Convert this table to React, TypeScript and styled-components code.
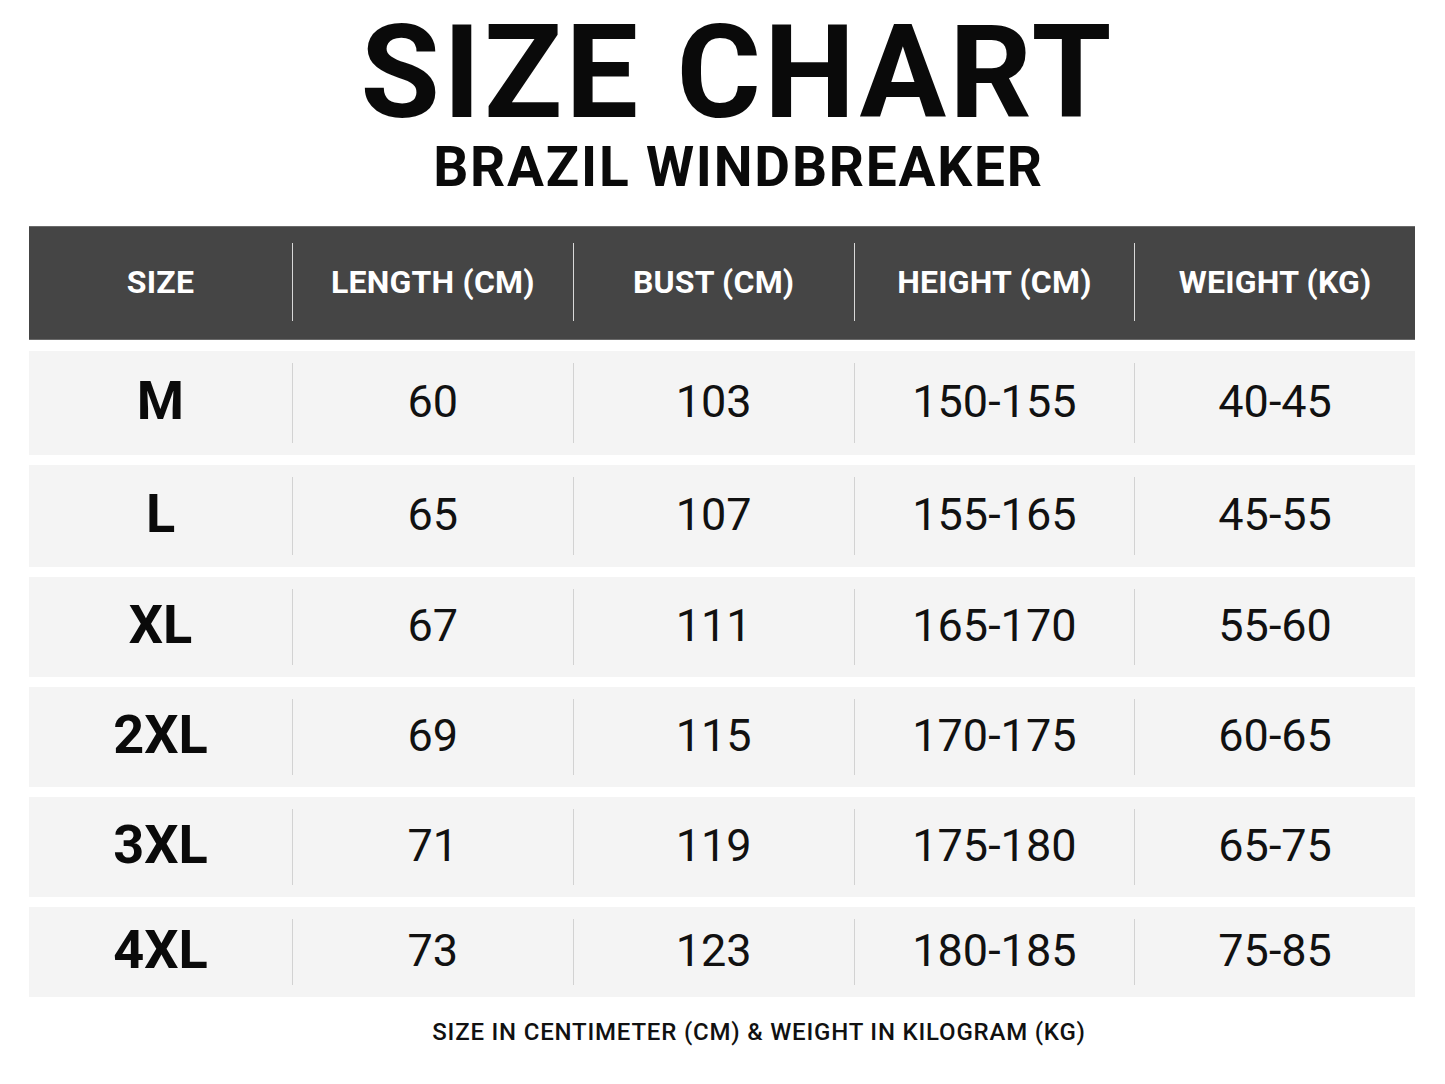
import React from 'react';
import styled, { createGlobalStyle } from 'styled-components';

const GlobalStyle = createGlobalStyle`
  html, body {
    margin: 0;
    padding: 0;
    background: #ffffff;
  }
  body {
    font-family: Roboto, 'Liberation Sans', Arial, sans-serif;
    color: #111111;
  }
`;

type SizeRow = {
  size: string;
  length: string;
  bust: string;
  height: string;
  weight: string;
  rowHeight: number;
};

const headings = ['SIZE', 'LENGTH (CM)', 'BUST (CM)', 'HEIGHT (CM)', 'WEIGHT (KG)'];

const rows: SizeRow[] = [
  { size: 'M', length: '60', bust: '103', height: '150-155', weight: '40-45', rowHeight: 104 },
  { size: 'L', length: '65', bust: '107', height: '155-165', weight: '45-55', rowHeight: 102 },
  { size: 'XL', length: '67', bust: '111', height: '165-170', weight: '55-60', rowHeight: 100 },
  { size: '2XL', length: '69', bust: '115', height: '170-175', weight: '60-65', rowHeight: 100 },
  { size: '3XL', length: '71', bust: '119', height: '175-180', weight: '65-75', rowHeight: 100 },
  { size: '4XL', length: '73', bust: '123', height: '180-185', weight: '75-85', rowHeight: 90 },
];

export default function App() {
  return (
    <>
      <GlobalStyle />
      <Page>
        <Title>SIZE CHART</Title>
        <Subtitle>BRAZIL WINDBREAKER</Subtitle>

        <Table>
          <HeaderRow>
            {headings.map((h, i) => (
              <HeadCell key={h} $first={i === 0}>
                {h}
              </HeadCell>
            ))}
          </HeaderRow>

          {rows.map((r) => (
            <BodyRow key={r.size} $height={r.rowHeight}>
              <SizeCell $first>{r.size}</SizeCell>
              <ValueCell>{r.length}</ValueCell>
              <ValueCell>{r.bust}</ValueCell>
              <ValueCell>{r.height}</ValueCell>
              <ValueCell>{r.weight}</ValueCell>
            </BodyRow>
          ))}
        </Table>

        <Note>SIZE IN CENTIMETER (CM) &amp; WEIGHT IN KILOGRAM (KG)</Note>
      </Page>
    </>
  );
}

const Page = styled.main`
  display: flex;
  flex-direction: column;
  align-items: center;
  padding: 5px 30px 40px 29px;
  width: 1445px;
  box-sizing: border-box;
`;

const Title = styled.h1`
  margin: 0 0 0 31px;
  font-family: Roboto, 'Liberation Sans', sans-serif;
  font-weight: 700;
  font-size: 129px;
  line-height: 1.05;
  letter-spacing: 3.2px;
  color: #0a0a0a;
`;

const Subtitle = styled.h2`
  margin: 0 0 0 33px;
  font-family: Roboto, 'Liberation Sans', sans-serif;
  font-weight: 700;
  font-size: 55px;
  line-height: 1;
  letter-spacing: 1.8px;
  color: #0a0a0a;
`;

const Table = styled.section`
  margin-top: 31px;
  width: 100%;
  display: flex;
  flex-direction: column;
  gap: 10px;
`;

const gridCols = `
  display: grid;
  grid-template-columns: 263px repeat(4, 1fr);
`;

const HeaderRow = styled.div`
  ${gridCols}
  height: 114px;
  align-items: stretch;
  background: #454545;
  border-top: 1px solid #6a6a6a;
  border-bottom: 1px solid #6a6a6a;
  box-sizing: border-box;
  margin-bottom: 1px;
`;

const HeadCell = styled.div<{ $first?: boolean }>`
  display: flex;
  align-items: center;
  justify-content: center;
  margin: 16px 0 18px;
  border-left: ${(p) => (p.$first ? 'none' : '1.5px solid #d8d8d8')};
  font-family: Roboto, 'Liberation Sans', sans-serif;
  font-weight: 700;
  font-size: 32px;
  letter-spacing: 0.2px;
  color: #ffffff;
`;

const BodyRow = styled.div<{ $height: number }>`
  ${gridCols}
  height: ${(p) => p.$height}px;
  background: #f4f4f4;
`;

const Cell = styled.div<{ $first?: boolean }>`
  display: flex;
  align-items: center;
  justify-content: center;
  margin: 12px 0;
  padding-bottom: 4px;
  border-left: ${(p) => (p.$first ? 'none' : '1px solid #d2d2d2')};
  font-family: Roboto, 'Liberation Sans', sans-serif;
  line-height: 1;
  color: #111111;
`;

const SizeCell = styled(Cell)`
  font-weight: 700;
  font-size: 54px;
  color: #0a0a0a;
`;

const ValueCell = styled(Cell)`
  font-weight: 400;
  font-size: 45px;
`;

const Note = styled.p`
  margin: 21px 0 0 74px;
  font-family: Roboto, 'Liberation Sans', sans-serif;
  font-weight: 500;
  font-size: 24px;
  letter-spacing: 0.8px;
  color: #111111;
`;
